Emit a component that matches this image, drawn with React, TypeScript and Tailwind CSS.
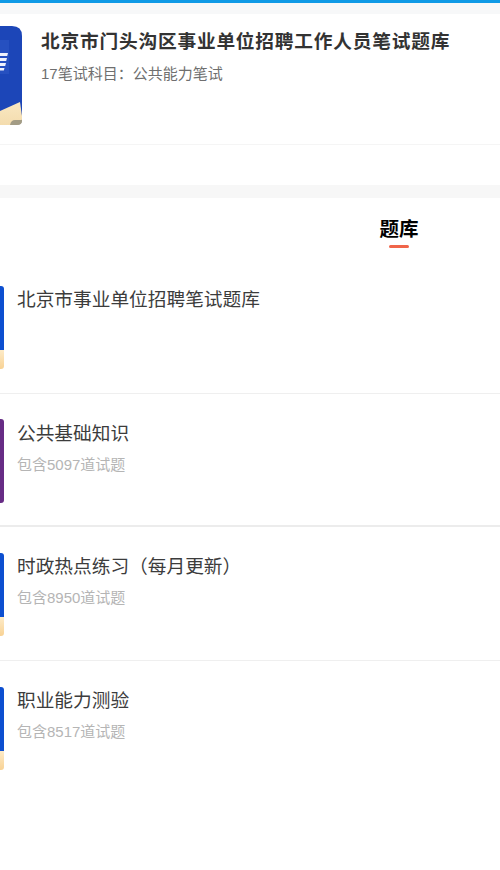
const font = { fontFamily: '"Liberation Sans", "Noto Sans CJK SC", sans-serif' };

type Item = {
  title: string;
  sub?: string;
  purple?: boolean;
  thick?: boolean;
  last?: boolean;
};

const items: Item[] = [
  { title: "北京市事业单位招聘笔试题库" },
  { title: "公共基础知识", sub: "包含5097道试题", purple: true, thick: true },
  { title: "时政热点练习（每月更新）", sub: "包含8950道试题" },
  { title: "职业能力测验", sub: "包含8517道试题", last: true },
];

function BigCover() {
  return (
    <svg viewBox="0 0 22 99" className="h-[99px] w-[22px] shrink-0">
      <defs>
        <linearGradient id="cream" x1="0" y1="0" x2="0" y2="1">
          <stop offset="0" stopColor="#f9e8c2" />
          <stop offset="1" stopColor="#f4dcae" />
        </linearGradient>
      </defs>
      <path d="M0 0H12Q22 0 22 10V93Q22 99 16 99H0Z" fill="#1c46b8" />
      <rect x="0" y="14" width="9" height="34" fill="#2650c0" />
      <path d="M0 27H8L7.2 30H0ZM0 32H7L6.2 35H0ZM0 37H6L5.2 40H0ZM0 42H4.5L3.8 44.5H0Z" fill="#eef2fc" />
      <path d="M0 85L20 76L22 90V93Q22 99 16 99H0Z" fill="url(#cream)" />
      <path d="M10 99Q11 94 15 94H22V95Q22 99 17 99Z" fill="#a39c85" />
    </svg>
  );
}

function SmallCover({ purple }: { purple?: boolean }) {
  if (purple) {
    return <div className="h-[83.5px] w-1 shrink-0 rounded-r-[3px] bg-[#672c85]" />;
  }
  return (
    <div className="flex h-[83.5px] w-1 shrink-0 flex-col overflow-hidden rounded-r-[3px]">
      <div className="h-[64px] bg-[#0d4fd0]" />
      <div className="flex-1 bg-gradient-to-b from-[#fdebc8] to-[#f8d294]" />
    </div>
  );
}

function Row({ item }: { item: Item }) {
  const border = item.last ? "" : item.thick ? "border-b-2 border-[#ececec]" : "border-b border-[#efefef]";
  return (
    <div className={`flex h-[133.6px] gap-[13px] pt-[25.8px] ${border}`}>
      <SmallCover purple={item.purple} />
      <div className="pt-[0.4px]">
        <p className="text-[18.7px] leading-[28px] text-[#3c3c3c]">{item.title}</p>
        {item.sub && <p className="mt-[7px] text-[15px] leading-[20px] text-[#b5b5b5]">{item.sub}</p>}
      </div>
    </div>
  );
}

export default function App() {
  return (
    <div className="h-[870px] w-[500px] overflow-hidden bg-white" style={font}>
      <div className="h-[3px] bg-[#0f9ae6]" />
      <div className="h-[11px] bg-[#f7f8f9]" />
      <div className="flex h-[131px] gap-[19px] border-b border-[#f5f5f5] pt-3">
        <BigCover />
        <div>
          <p className="mt-[2px] text-[18.7px] font-bold leading-[28px] tracking-[0.8px] text-[#333333]">北京市门头沟区事业单位招聘工作人员笔试题库</p>
          <p className="mt-[8px] text-[15px] leading-[20px] text-[#6f6f6f]">17笔试科目：公共能力笔试</p>
        </div>
      </div>
      <div className="h-[40px]" />
      <div className="h-[13px] bg-[#f7f7f7]" />
      <div className="flex h-[62px] flex-col items-center pl-[298px] pt-[17px]">
        <p className="text-[19.5px] font-bold leading-[28px] text-black">题库</p>
        <div className="mt-[2px] h-[3px] w-5 rounded-full bg-[#f0654a]" />
      </div>
      {items.map((item) => (
        <Row key={item.title} item={item} />
      ))}
    </div>
  );
}
